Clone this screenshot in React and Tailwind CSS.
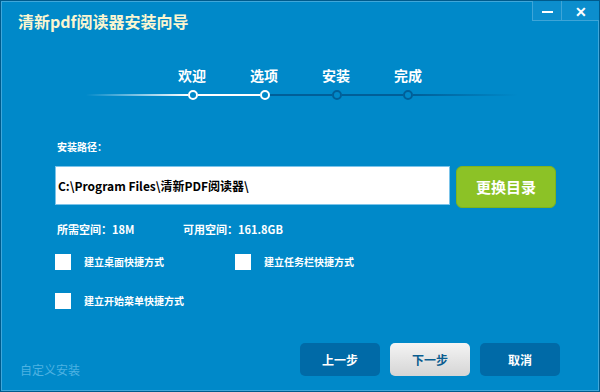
import React from 'react';

const font = { fontFamily: '"Noto Sans CJK SC", "Noto Sans", sans-serif' };

const steps = ['欢迎', '选项', '安装', '完成'];

const Check = ({ label, className = '' }) => (
  <div className={`flex items-center ${className}`}>
    <div className="w-4 h-4 bg-white shrink-0" />
    <span className="ml-[13px] text-[10px] font-bold text-white leading-none">{label}</span>
  </div>
);

const App = () => {
  return (
    <div className="w-[600px] h-[392px] bg-[#005b8c] p-px" style={font}>
      <div className="w-full h-full bg-[#0089c9] border border-[#3fa7da] flex flex-col">
        <div className="flex h-[38px] shrink-0">
          <div className="pl-4 pt-[8px] text-[16px] font-bold text-[#fbf6d0] leading-[22px]">清新pdf阅读器安装向导</div>
          <div className="ml-auto flex h-[20px] -mt-px -mr-px">
            <div className="w-[29px] h-full border-l border-b border-[#3ea5d8] bg-[#0c8ecd] flex items-center justify-center">
              <div className="w-[11px] h-[2px] bg-white mt-[2px]" />
            </div>
            <div className="w-[38px] h-full border-l border-b border-[#3ea5d8] bg-[#0c8ecd] flex items-center justify-center text-white font-bold text-[14px] leading-none">
              ✕
            </div>
          </div>
        </div>

        <div className="flex pl-[154px] mt-[26px]">
          {steps.map((s) => (
            <div key={s} className="w-[72px] text-center text-[14px] font-bold text-white leading-[18px]">{s}</div>
          ))}
        </div>
        <div className="flex items-center h-[10px] mt-[6px] pl-[84px]">
          <div className="w-[102px] h-[2px] bg-gradient-to-r from-transparent to-white" />
          <div className="w-[10px] h-[10px] rounded-full border-2 border-white shrink-0" />
          <div className="w-[62px] h-[2px] bg-white" />
          <div className="w-[10px] h-[10px] rounded-full border-2 border-white shrink-0" />
          <div className="w-[62px] h-[2px] bg-[#005f98]" />
          <div className="w-[10px] h-[10px] rounded-full border-2 border-[#005f98] shrink-0" />
          <div className="w-[61px] h-[2px] bg-[#005f98]" />
          <div className="w-[10px] h-[10px] rounded-full border-2 border-[#005f98] shrink-0" />
          <div className="w-[105px] h-[2px] bg-gradient-to-r from-[#005f98] to-transparent" />
        </div>

        <div className="pl-[55px] mt-[42px] text-[10px] font-bold text-white leading-none">安装路径：</div>
        <div className="flex items-center pl-[53px] mt-[11px]">
          <div className="w-[395px] h-[39px] bg-white border border-[#7cc4ea] flex items-center pl-[2px] text-[12px] font-bold text-black">
            C:\Program Files\清新PDF阅读器\
          </div>
          <div className="ml-[6px] w-[100px] h-[42px] rounded-[6px] bg-[#8cc226] border border-[#7eb31d] flex items-center justify-center text-[15px] font-bold text-white mt-[3px]">
            更换目录
          </div>
        </div>

        <div className="flex pl-[55px] mt-[16px] text-[11px] font-bold text-white leading-none">
          <span className="w-[126px]">所需空间：18M</span>
          <span>可用空间：161.8GB</span>
        </div>
        <div className="flex pl-[53px] mt-[19px]">
          <Check label="建立桌面快捷方式" className="w-[180px]" />
          <Check label="建立任务栏快捷方式" />
        </div>
        <Check label="建立开始菜单快捷方式" className="pl-[53px] mt-[23px]" />

        <div className="flex items-end mt-auto pb-[14px]">
          <div className="pl-[18px] text-[12px] text-[#4eb2e2] leading-none pb-[0px]">自定义安装</div>
          <div className="ml-auto flex gap-[10px] mr-[38px]">
            <div className="w-[80px] h-[33px] rounded-[5px] bg-[#006aa7] flex items-center justify-center text-white text-[12px] font-bold">上一步</div>
            <div className="w-[80px] h-[33px] rounded-[5px] bg-gradient-to-b from-[#f4f4f4] to-[#d5d5d5] flex items-center justify-center text-[#0a5d8f] text-[12px] font-bold">下一步</div>
            <div className="w-[80px] h-[33px] rounded-[5px] bg-[#006aa7] flex items-center justify-center text-white text-[12px] font-bold">取消</div>
          </div>
        </div>
      </div>
    </div>
  );
};

export default App;
